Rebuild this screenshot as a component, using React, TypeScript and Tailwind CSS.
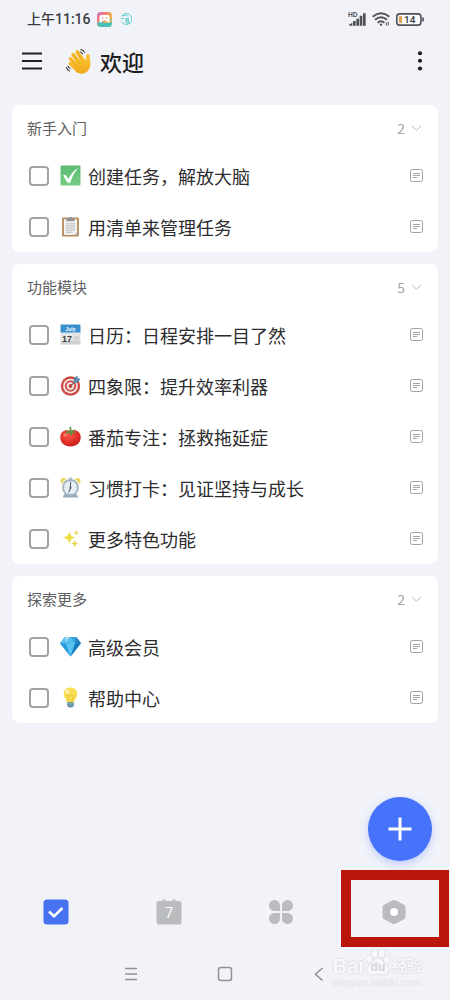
import { useState, type ReactNode } from 'react';

type Task = { id: string; icon: ReactNode; title: string };
type Section = { title: string; tasks: Task[] };

function Emoji({ children, size = 'size-[21px]' }: { children: ReactNode; size?: string }) {
  return (
    <svg viewBox="0 0 40 40" className={`${size} shrink-0`} aria-hidden="true">
      {children}
    </svg>
  );
}

const WaveIcon = (
  <Emoji size="size-[27px]">
    <defs>
      <linearGradient id="hand" x1="0" y1="0" x2="0" y2="1">
        <stop offset="0" stopColor="#fcc935" />
        <stop offset="1" stopColor="#f0a61c" />
      </linearGradient>
    </defs>
    <g stroke="#f7b926" strokeLinecap="round" fill="none">
      <path d="M12 10 26 27" strokeWidth="5.4" />
      <path d="M18 6 29 21" strokeWidth="5.4" />
      <path d="M8 16 22 31" strokeWidth="5.2" />
      <path d="M7.500 23 19 34" strokeWidth="4.800" />
      <path d="M34 11.500 33 23" strokeWidth="5.200" />
    </g>
    <path d="M14 20 26 12.500c2 2 3.500 5 5 7 1-3 .5-8 2.500-9.500 2-1 3 .8 3.200 3 .2 4 1.300 7 1 11-.5 6-3 10.500-8 13-5 2.300-10 .8-14.500-3z" fill="url(#hand)" />
    <path d="m12.500 11.500 10 12M18.500 8.500 27 20M9.500 18.500l9 10" stroke="#e09a16" strokeWidth="1" fill="none" strokeLinecap="round" />
    <path d="M23.500 2.500c2.500.3 4.500 1.800 5.500 4M22.500 6c1.700.3 2.800 1.200 3.500 2.800M2 28.500c.5 2.700 2 4.500 4.500 5.500M4.500 27c.5 1.600 1.400 2.700 3 3.500" stroke="#454545" strokeWidth="1.700" fill="none" strokeLinecap="round" />
  </Emoji>
);

const CheckIcon = (
  <Emoji>
    <defs>
      <linearGradient id="green" x1="0" y1="0" x2="0" y2="1">
        <stop offset="0" stopColor="#5dbb74" />
        <stop offset="1" stopColor="#76cc83" />
      </linearGradient>
    </defs>
    <rect x="1" y="1" width="38" height="38" rx="2" fill="url(#green)" />
    <path d="M6 20c2-2 5-1.500 6 .5l4 6C20 18 26 10 35 5c-6 7-12 17-15 27-1 3-5 3-7 0z" fill="#fff" />
  </Emoji>
);

const ClipboardIcon = (
  <Emoji>
    <rect x="4" y="3" width="32" height="36" rx="2" fill="#b78a5d" />
    <path d="M7.500 6h25v30h-25z" fill="#f5f5f3" />
    <path d="M26 36h6.500v-6z" fill="#c9c9c7" />
    <path d="M12 5.500h4c0-5 8-5 8 0h4V10H12z" fill="#8f9298" />
    <path d="M11 15h18M11 19h18M11 23h18M11 27h18M11 31h13" stroke="#a2a5ac" strokeWidth="1.500" />
  </Emoji>
);

const CalendarIcon = (
  <Emoji>
    <rect x="1" y="13" width="38" height="26" rx="2" fill="#e3e5e6" />
    <path d="M2 1h36q1 0 1 1v14H1V2q0-1 1-1z" fill="#398fce" />
    <path d="M1 33h38v4q0 2-2 2H3q-2 0-2-2z" fill="#cfd1d2" />
    <text x="20" y="12.500" textAnchor="middle" fontSize="9.500" fontWeight="700" fill="#fff" fontFamily="Liberation Sans, sans-serif">July</text>
    <text x="4" y="35" fontSize="17" fontWeight="700" fill="#3d3f41" fontFamily="Liberation Sans, sans-serif">17</text>
    <path d="M26 25h11M26 29h11M26 33h11M28 22v13M32 22v13M36 22v13" stroke="#c3c5c7" strokeWidth="1" />
  </Emoji>
);

const TargetIcon = (
  <Emoji>
    <circle cx="20" cy="21" r="18.500" fill="#cf4944" />
    <circle cx="20" cy="21" r="14" fill="#f3eeee" />
    <circle cx="20" cy="21" r="11" fill="#d45550" />
    <circle cx="20" cy="21" r="7" fill="#f3eeee" />
    <circle cx="20" cy="21" r="3.800" fill="#cf4944" />
    <path d="M20 21 32 9" stroke="#7f5146" strokeWidth="2" />
    <path d="m26 13 1-7 6-5 1 5 5 1-4.500 6.500-7.500 2z" fill="#4b84a4" />
    <path d="m28 13 6-7" stroke="#8fc0d8" strokeWidth="1.300" />
  </Emoji>
);

const TomatoIcon = (
  <Emoji>
    <defs>
      <radialGradient id="tomato" cx=".4" cy=".3" r=".8">
        <stop offset="0" stopColor="#fb5a49" />
        <stop offset=".6" stopColor="#e02c24" />
        <stop offset="1" stopColor="#b91917" />
      </radialGradient>
    </defs>
    <path d="M20 9c11-3 19 2 19.500 12C40 32 31 39 20 39S0 32 .5 21C1 11 9 6 20 9z" fill="url(#tomato)" />
    <path d="M19 10 18 2l3-1 1 8 8-3-4 5 6 4-8-2-3 6-3-6-9 3 5-5-6-4z" fill="#5c9440" />
    <ellipse cx="10" cy="17" rx="4" ry="2.500" fill="#ff9b8c" opacity=".65" transform="rotate(-30 10 17)" />
  </Emoji>
);

const ClockIcon = (
  <Emoji>
    <circle cx="7" cy="8" r="6" fill="#e8d55c" />
    <circle cx="33" cy="8" r="6" fill="#e8d55c" />
    <path d="M3 13 12 4M37 13 28 4" stroke="#f6f2d6" strokeWidth="2.500" />
    <path d="M6 36 10 31h20l4 5v3H6z" fill="#9aacba" />
    <path d="M18 1h4v5h-4z" fill="#9aacba" />
    <circle cx="20" cy="20" r="16" fill="#a5b6c3" />
    <circle cx="20" cy="20" r="12.500" fill="#e8f0f6" />
    <path d="M20 10v11l-3 7" stroke="#475968" strokeWidth="2" fill="none" strokeLinecap="round" strokeLinejoin="round" />
    <circle cx="20" cy="20.500" r="2" fill="#475968" />
    <path d="M20 8.500v1.500M31 20h-1.500M9 20h1.500M20 32v-1.500" stroke="#8195a4" strokeWidth="1.200" />
  </Emoji>
);

const SparklesIcon = (
  <Emoji>
    <path d="M18 5c1 8 3 11 12 13-9 2-11 5-12 14-1-9-3-12-14-14 11-2 13-5 14-13z" fill="#efdc43" />
    <path d="M31 3c.7 4 2 5.500 6 6.500-4 1-5.300 2.500-6 6.500-.7-4-2-5.500-6-6.500 4-1 5.300-2.500 6-6.500z" fill="#ecdf80" />
    <path d="M28 22c.8 4.500 2.300 6.500 7 7.500-4.700 1-6.200 3-7 8-.8-5-2.300-7-7-8 4.700-1 6.200-3 7-7.500z" fill="#e8d459" />
  </Emoji>
);

const DiamondIcon = (
  <Emoji>
    <path d="M9 2h22l9 12-20 25L0 14z" fill="#37a7e1" />
    <path d="M9 2 0 14h11z" fill="#5fc0ed" />
    <path d="M9 2h11l-9 12z" fill="#91d9f7" />
    <path d="M20 2 11 14h18z" fill="#54bdf0" />
    <path d="M20 2h11l-2 12z" fill="#3aa3de" />
    <path d="m31 2 9 12H29z" fill="#2484c2" />
    <path d="M0 14h11l9 25z" fill="#279be0" />
    <path d="M11 14h18l-9 25z" fill="#56c3f3" />
    <path d="M29 14h11L20 39z" fill="#1879ba" />
  </Emoji>
);

const BulbIcon = (
  <Emoji>
    <path d="M20 1c8 0 13 5.500 13 12.500 0 7-5.500 9.500-6.500 16.500h-13C12.500 23 7 20.500 7 13.500 7 6.500 12 1 20 1z" fill="#f8df55" />
    <path d="m14 15 4 14h4l4-14-3 3-3-3-3 3z" fill="none" stroke="#eab92f" strokeWidth="1.300" />
    <ellipse cx="14" cy="9" rx="3" ry="4.500" fill="#fff6b5" transform="rotate(30 14 9)" />
    <path d="M13.500 29h13v5q0 5-6.500 5t-6.500-5z" fill="#56889f" />
    <path d="M13.500 31.500h13M14 34.500h12" stroke="#a9c6d1" strokeWidth="1.200" />
  </Emoji>
);

const sections: Section[] = [
  {
    title: '新手入门',
    tasks: [
      { id: 'create', icon: CheckIcon, title: '创建任务，解放大脑' },
      { id: 'lists', icon: ClipboardIcon, title: '用清单来管理任务' },
    ],
  },
  {
    title: '功能模块',
    tasks: [
      { id: 'calendar', icon: CalendarIcon, title: '日历：日程安排一目了然' },
      { id: 'matrix', icon: TargetIcon, title: '四象限：提升效率利器' },
      { id: 'pomodoro', icon: TomatoIcon, title: '番茄专注：拯救拖延症' },
      { id: 'habit', icon: ClockIcon, title: '习惯打卡：见证坚持与成长' },
      { id: 'more', icon: SparklesIcon, title: '更多特色功能' },
    ],
  },
  {
    title: '探索更多',
    tasks: [
      { id: 'premium', icon: DiamondIcon, title: '高级会员' },
      { id: 'help', icon: BulbIcon, title: '帮助中心' },
    ],
  },
];

function StatusBar() {
  return (
    <div className="flex h-[38px] items-center justify-between pl-[27px] pr-[26px] text-[#3b3c40]">
      <div className="flex items-center">
        <span className="font-['Roboto','Noto_Sans_CJK_SC',sans-serif] text-[14px] font-medium leading-5">上午11:16</span>
        <svg viewBox="0 0 30 30" className="ml-[6px] size-[15px]" aria-hidden="true">
          <defs>
            <linearGradient id="app" x1="0" y1="0" x2="1" y2="1">
              <stop offset="0" stopColor="#c271d8" />
              <stop offset=".3" stopColor="#f07a78" />
              <stop offset=".6" stopColor="#f5b04c" />
              <stop offset="1" stopColor="#4fd0b0" />
            </linearGradient>
          </defs>
          <rect width="30" height="30" rx="7" fill="url(#app)" />
          <path d="M1 21q6-3 13 0t15 0v2q0 7-7 7H8q-7 0-7-7z" fill="#45bfb8" />
          <path d="M8 6h14q3 0 3 3v11q-3 3-5-1l-5-3-5 3q-2 4-5 1V9q0-3 3-3z" fill="#fff" />
          <circle cx="11" cy="12" r="1.500" fill="#e57c79" />
          <circle cx="19" cy="12" r="1.500" fill="#e57c79" />
        </svg>
        <svg viewBox="0 0 24 24" className="ml-2 size-3" fill="none" stroke="#4cc9cd" strokeWidth="1.800" aria-hidden="true">
          <path d="M3 7a11 11 0 1 1 0 10M1 11h7M5 6c4-3 9-2 12 1" />
          <path d="M12 11h5v7h-5zM11 14h7M12 20h8" />
        </svg>
      </div>
      <div className="flex items-center gap-[6px]">
        <svg viewBox="0 0 54 42" className="h-[14px] w-[18px]" fill="#505257" aria-hidden="true">
          <text x="0" y="15" fontSize="20" fontWeight="700" fontFamily="Liberation Sans, sans-serif">HD</text>
          <path d="M4 37q6-3 9-5v9H4zM15 27h8v14h-8zM25 20h8v21h-8zM35 11h8v30h-8zM45 4h8v37h-8z" />
        </svg>
        <svg viewBox="0 0 54 42" className="h-[14px] w-[18px]" fill="none" stroke="#505257" strokeWidth="5.800" aria-hidden="true">
          <path d="M2 14q25-20 50 0M9 23q18-15 36 0M17 32q10-9 20 0" />
          <circle cx="27" cy="38" r="3.500" fill="#505257" stroke="none" />
          <path d="M43 31v10M49 30v10" strokeWidth="3" />
        </svg>
        <svg viewBox="0 0 87 40" className="h-[13px] w-[28px]" aria-hidden="true">
          <rect x="2.500" y="2.500" width="75" height="35" rx="9" fill="#fbfbfc" stroke="#505257" strokeWidth="5" />
          <path d="M84 14v12" stroke="#505257" strokeWidth="5" />
          <rect x="9" y="9" width="10" height="22" rx="3" fill="#dba459" />
          <text x="25" y="31" fontSize="31" fontWeight="500" fill="#3b3c40" fontFamily="Roboto, sans-serif">14</text>
        </svg>
      </div>
    </div>
  );
}

function TopBar() {
  return (
    <header className="flex h-[46px] items-center pl-[22px] pr-[18px]">
      <button type="button" aria-label="菜单">
        <svg viewBox="0 0 20 20" className="size-5" stroke="#1f2024" strokeWidth="1.800" aria-hidden="true">
          <path d="M0 2.500h20M0 10h20M0 17.500h20" />
        </svg>
      </button>
      <h1 className="ml-[23px] flex items-center gap-2 text-[22px] font-medium leading-8 text-[#1c1d20]">
        {WaveIcon}
        欢迎
      </h1>
      <button type="button" aria-label="更多选项" className="ml-auto">
        <svg viewBox="0 0 24 40" className="h-5 w-6" fill="#1f2024" aria-hidden="true">
          <circle cx="12" cy="4.500" r="4.200" />
          <circle cx="12" cy="19.500" r="4.200" />
          <circle cx="12" cy="35" r="4.200" />
        </svg>
      </button>
    </header>
  );
}

function TaskRow({ task }: { task: Task }) {
  const [done, setDone] = useState(false);
  return (
    <li className="flex h-[51px] items-center pl-[17px] pr-[15px]">
      <input
        id={task.id}
        type="checkbox"
        checked={done}
        onChange={(e) => setDone(e.target.checked)}
        className="size-5 shrink-0 appearance-none rounded-[4px] border-2 border-[#a3a3a3] bg-white checked:bg-[#a3a3a3]"
      />
      <label htmlFor={task.id} className="ml-[11px] flex flex-1 items-center gap-[7px] text-[18px] leading-6 text-[#2c2c2e]">
        {task.icon}
        <span>{task.title}</span>
      </label>
      <svg viewBox="0 0 26 26" className="size-[13px]" fill="none" stroke="#a4a4a6" strokeWidth="2" aria-hidden="true">
        <rect x="1" y="1" width="24" height="24" rx="3.500" />
        <path d="M6 9h14M6 13h14M6 17h8" />
      </svg>
    </li>
  );
}

function SectionCard({ section }: { section: Section }) {
  const [open, setOpen] = useState(true);
  return (
    <section className="rounded-lg bg-white">
      <h2>
        <button
          type="button"
          aria-expanded={open}
          onClick={() => setOpen(!open)}
          className="flex h-[45px] w-full items-center pl-[15px] pr-4 text-left"
        >
          <span className="text-[15px] leading-5 text-[#606062]">{section.title}</span>
          <span className="ml-auto text-[14px] leading-5 text-[#a5a5a7]">{section.tasks.length}</span>
          <svg viewBox="0 0 22 12" className="ml-[6px] h-[6px] w-[11px]" fill="none" stroke="#b9b9bb" strokeWidth="2" aria-hidden="true">
            <path d="m1.500 1.500 9.500 9 9.500-9" />
          </svg>
        </button>
      </h2>
      {open && (
        <ul>
          {section.tasks.map((task) => (
            <TaskRow key={task.id} task={task} />
          ))}
        </ul>
      )}
    </section>
  );
}

function TabBar() {
  return (
    <nav className="grid h-[72px] grid-cols-4">
      <button type="button" aria-label="任务" className="flex items-center justify-center">
        <svg viewBox="0 0 26 26" className="size-[26px]" aria-hidden="true">
          <rect x=".5" y=".5" width="25" height="25" rx="3.500" fill="#4772f0" />
          <path d="m6 12.500 5 4.800 8.500-8.300" fill="none" stroke="#fff" strokeWidth="2.600" />
        </svg>
      </button>
      <button type="button" aria-label="日历" className="flex items-center justify-center">
        <svg viewBox="0 0 26 26" className="size-[26px]" aria-hidden="true">
          <path d="M6.500.5h3V2h7V.5h3V2H23q2.500 0 2.500 2.500V23q0 2.500-2.500 2.500H3Q.5 25.500.5 23V4.500Q.5 2 3 2h3.500z" fill="#bbbcbf" />
          <text x="13.300" y="18.500" textAnchor="middle" fontSize="14" fill="#fff" fontFamily="Roboto, sans-serif">7</text>
        </svg>
      </button>
      <button type="button" aria-label="应用" className="flex items-center justify-center">
        <svg viewBox="0 0 26 26" className="size-[26px]" fill="#bbbcbf" aria-hidden="true">
          <path d="M6.500 1a5.500 5.500 0 0 1 5.500 5.500V12H6.500a5.500 5.500 0 0 1 0-11zM19.500 1a5.500 5.500 0 0 1 0 11H14V6.500A5.500 5.500 0 0 1 19.500 1zM6.500 14H12v5.500A5.500 5.500 0 1 1 6.500 14zM14 14h5.500a5.500 5.500 0 1 1-5.500 5.500z" />
        </svg>
      </button>
      <div className="relative flex items-center justify-center">
        <button type="button" aria-label="设置">
          <svg viewBox="0 0 26 26" className="size-[26px]" aria-hidden="true">
            <path
              d="M11.500 1.300q1.500-.8 3 0l8.500 4.400q1.500.8 1.500 2.500v9.600q0 1.700-1.500 2.500l-8.500 4.400q-1.500.8-3 0L3 20.300q-1.500-.8-1.500-2.500V8.200Q1.500 6.500 3 5.700z"
              fill="#bbbcbf"
            />
            <circle cx="13" cy="13" r="4" fill="#fff" />
          </svg>
        </button>
        <div className="pointer-events-none absolute -top-1.5 bottom-px left-[3px] right-px border-10 border-[#ba160c]" />
      </div>
    </nav>
  );
}

function SystemNav() {
  return (
    <div className="flex h-[52px] items-center justify-center gap-[70px] text-[#919296]">
      <button type="button" aria-label="最近任务">
        <svg viewBox="0 0 24 24" className="size-6" stroke="currentColor" strokeWidth="1.500" aria-hidden="true">
          <path d="M6 6.500h12M6 12h12M6 17.500h12" />
        </svg>
      </button>
      <button type="button" aria-label="主页">
        <svg viewBox="0 0 24 24" className="size-6" fill="none" stroke="currentColor" strokeWidth="1.500" aria-hidden="true">
          <rect x="5.500" y="5.500" width="13" height="13" rx="2.500" />
        </svg>
      </button>
      <button type="button" aria-label="返回">
        <svg viewBox="0 0 24 24" className="size-6" fill="none" stroke="currentColor" strokeWidth="1.500" aria-hidden="true">
          <path d="m15.500 6-7 6.200 7 6.200" />
        </svg>
      </button>
    </div>
  );
}

function Watermark() {
  return (
    <div className="pointer-events-none absolute bottom-3 right-[28px] font-['Liberation_Sans','Noto_Sans_CJK_SC',sans-serif] text-[#f8f8fb]">
      <div className="flex items-end [filter:drop-shadow(0_0_1px_#cdced3)]">
        <span className="text-[20px] font-bold leading-5">Bai</span>
        <svg viewBox="0 0 28 30" className="h-[28px] w-[28px]" aria-hidden="true">
          <g fill="#f8f8fb">
            <ellipse cx="5" cy="12" rx="3" ry="4" transform="rotate(-20 5 12)" />
            <ellipse cx="10.500" cy="5.500" rx="3" ry="4.300" />
            <ellipse cx="18" cy="5.500" rx="3" ry="4.300" />
            <ellipse cx="23.500" cy="12" rx="3" ry="4" transform="rotate(20 23.500 12)" />
            <path d="M14 11c4 0 5 4 8 7 3 2.500 4 5 2.500 8-2 3.500-6 1.500-10.500 1.500S5.500 29.500 3.500 26C2 23 3 20.500 6 18c3-3 4-7 8-7z" />
          </g>
          <text x="14" y="25" textAnchor="middle" fontSize="13" fontWeight="700" fill="#d3d4d9" fontFamily="Liberation Sans, sans-serif">du</text>
        </svg>
        <span className="text-[15px] font-bold leading-5">经验</span>
      </div>
      <div className="text-center text-[11px] leading-3 text-[#eaebf0] [text-shadow:0_0_1px_#dcdde2]">jingyan.baidu.com</div>
    </div>
  );
}

export default function App() {
  return (
    <div className="flex min-h-screen flex-col bg-[#f2f3f9] font-['Noto_Sans_CJK_SC','Noto_Sans',sans-serif]">
      <StatusBar />
      <TopBar />
      <main className="flex flex-1 flex-col gap-3 px-3 pt-[21px]">
        {sections.map((section) => (
          <SectionCard key={section.title} section={section} />
        ))}
      </main>
      <footer className="relative">
        <button
          type="button"
          aria-label="添加任务"
          className="absolute bottom-full right-[18px] mb-[15px] flex size-16 items-center justify-center rounded-full bg-[#4772fa] shadow-[0_3px_8px_rgba(71,114,250,0.3)]"
        >
          <svg viewBox="0 0 24 24" className="size-6" stroke="#fff" strokeWidth="3" aria-hidden="true">
            <path d="M12 .5v23M.5 12h23" />
          </svg>
        </button>
        <TabBar />
        <SystemNav />
        <Watermark />
      </footer>
    </div>
  );
}
